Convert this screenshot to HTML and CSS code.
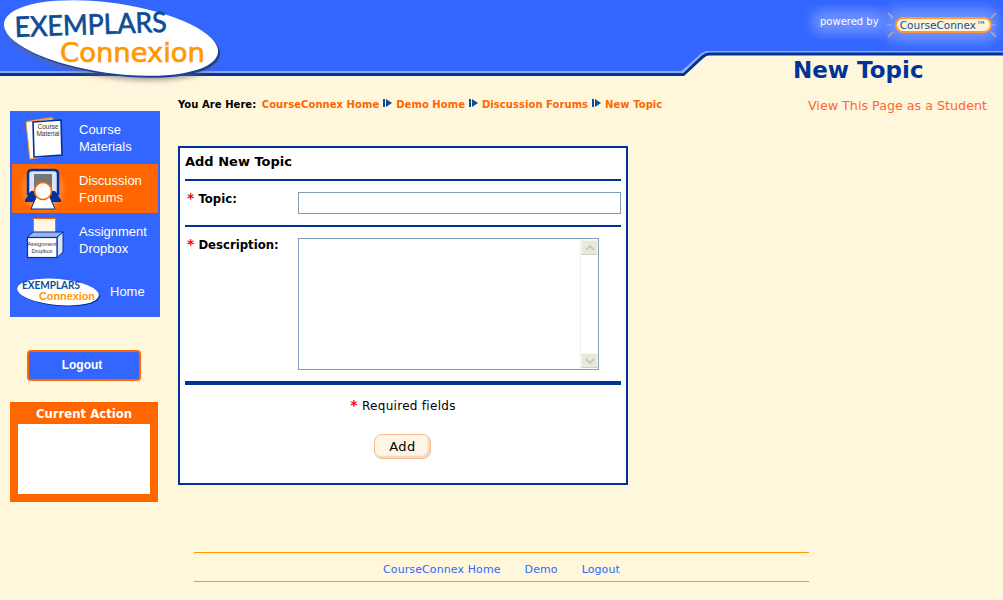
FILE: index.html
```html
<!DOCTYPE html>
<html lang="en">
  <head>
    <meta charset="UTF-8" />
    <title>New Topic</title>
    <link rel="stylesheet" href="styles.css">
  </head>
  <body>
    <header class="header">
      <svg class="header-bg" width="1003" height="85" viewBox="0 0 1003 85">
        <defs>
          <filter id="soft" x="-20%" y="-20%" width="140%" height="140%"><feGaussianBlur stdDeviation="6" /></filter>
        </defs>
        <path d="M0 0H1003V51H709Q705 51 701 54L682 71H0Z" fill="#3366ff" />
        <rect x="812" y="10" width="74" height="24" rx="10" fill="#6b8fff" filter="url(#soft)" />
        <rect x="886" y="8" width="112" height="34" rx="12" fill="#6b8fff" filter="url(#soft)" />
        <path d="M0 72H682L701 55Q705 52 709 52H1003" fill="none" stroke="#8fa8f0" stroke-width="2" />
        <path d="M0 74.5H683.5L703 56.5Q706 54 709 54H1003" fill="none" stroke="#003399" stroke-width="3" />
        <path d="M888 13L893 18M887 25H892M888 37L893 32M996 13L991 18M991 25H996M996 37L991 32" stroke="#ffb066" stroke-width="1.2" opacity=".8" />
      </svg>
      <svg class="logo" width="232" height="90" viewBox="0 0 232 90">
        <defs>
          <filter id="drop" x="-10%" y="-10%" width="120%" height="130%"><feGaussianBlur stdDeviation="2.5" /></filter>
        </defs>
        <ellipse cx="113" cy="43" rx="107" ry="35" transform="rotate(8 113 43)" fill="#666" opacity=".55" filter="url(#drop)" />
        <ellipse cx="113" cy="40" rx="108" ry="35" transform="rotate(8 113 40)" fill="#1c3f9c" />
        <ellipse cx="111" cy="38" rx="108" ry="35" transform="rotate(8 111 38)" fill="#fff" />
        <text x="15" y="37" class="logo-top" textLength="152" lengthAdjust="spacingAndGlyphs" transform="rotate(-2 15 37)">EXEMPLARS</text>
        <text x="60" y="62" class="logo-bottom" textLength="145" lengthAdjust="spacingAndGlyphs">Connexion</text>
      </svg>
      <div class="powered">
        <span class="powered-by">powered by</span>
        <span class="cc-badge">CourseConnex™</span>
      </div>
      <h1 class="page-title">New Topic</h1>
    </header>

    <div class="page">
      <aside class="sidebar">
        <nav class="menu">
          <a class="menu-item">
            <svg class="menu-icon" width="44" height="48" viewBox="0 0 44 48">
              <path d="M4 7L29 3L31 6L6 43Z" fill="#ff9933" />
              <path d="M3 8L28 5L30 41L7 45Z" fill="#fff" stroke="#ff9933" />
              <path d="M10 8L38 6L39 41L11 43Z" fill="#fff" stroke="#003399" stroke-width="1.6" />
              <text x="25" y="15" class="icon-text">Course</text>
              <text x="25" y="22" class="icon-text">Material</text>
            </svg>
            <span>Course<br>Materials</span>
          </a>
          <a class="menu-item active">
            <svg class="menu-icon" width="44" height="48" viewBox="0 0 44 48">
              <defs>
                <radialGradient id="glow">
                  <stop offset="0" stop-color="#ffc299" />
                  <stop offset="1" stop-color="#ff6600" />
                </radialGradient>
              </defs>
              <circle cx="20" cy="24" r="25" fill="url(#glow)" />
              <path d="M9 5H31Q35 5 35 9V29H5V9Q5 5 9 5Z" fill="#dbe4fa" stroke="#003399" stroke-width="2.5" />
              <rect x="11" y="9" width="18" height="13" fill="#777" />
              <path d="M2 35L8 26H32L38 35V37H2Z" fill="#003399" />
              <path d="M14 30H26L32 44H8Z" fill="#fff" stroke="#003399" />
              <circle cx="20" cy="26" r="8.5" fill="#fff" stroke="#ff6600" stroke-width="1.6" />
            </svg>
            <span>Discussion<br>Forums</span>
          </a>
          <a class="menu-item">
            <svg class="menu-icon" width="44" height="48" viewBox="0 0 44 48">
              <rect x="10.5" y="3.5" width="22" height="19" fill="#fff5e6" stroke="#ff6600" />
              <path d="M4 22.5L10 17H40L34 22.5Z" fill="#99b3ee" stroke="#003399" />
              <path d="M34 22.5L40 17V37L34 42.5Z" fill="#dbe4fa" stroke="#003399" />
              <rect x="4.5" y="22.5" width="29.5" height="20" fill="#fff" stroke="#003399" stroke-width="1.2" />
              <text x="19" y="31" class="icon-text icon-small">Assignment</text>
              <text x="19" y="38" class="icon-text icon-small">Dropbox</text>
            </svg>
            <span>Assignment<br>Dropbox</span>
          </a>
          <a class="menu-item menu-home">
            <svg class="home-logo" width="86" height="34" viewBox="0 0 86 34">
              <ellipse cx="44" cy="19" rx="41" ry="13" transform="rotate(5 44 19)" fill="#003399" />
              <ellipse cx="43" cy="18" rx="41" ry="13" transform="rotate(5 43 18)" fill="#fff" />
              <text x="7" y="15" class="home-top" textLength="58" lengthAdjust="spacingAndGlyphs">EXEMPLARS</text>
              <text x="24" y="26" class="home-bottom" textLength="56" lengthAdjust="spacingAndGlyphs">Connexion</text>
            </svg>
            <span>Home</span>
          </a>
        </nav>
        <a class="logout-btn">Logout</a>
        <section class="action-box">
          <h2>Current Action</h2>
          <div class="action-body"></div>
        </section>
      </aside>

      <main class="main">
        <div class="topline">
          <div class="crumbs">
            <b>You Are Here:</b>
            <a>CourseConnex Home</a><i class="arrow"></i><a>Demo Home</a><i class="arrow"></i><a>Discussion Forums</a><i class="arrow"></i><a>New Topic</a>
          </div>
          <a class="student-link">View This Page as a Student</a>
        </div>

        <form class="card">
          <h2 class="card-title">Add New Topic</h2>
          <hr class="rule">
          <div class="field field-topic">
            <label><em>*</em> Topic:</label>
            <input type="text" class="topic-input">
          </div>
          <hr class="rule">
          <div class="field field-desc">
            <label><em>*</em> Description:</label>
            <div class="text-box">
              <textarea></textarea>
              <div class="scrollbar">
                <span class="scroll-btn">
                  <svg width="10" height="6" viewBox="0 0 10 6"><path d="M1 5L5 1L9 5" fill="none" stroke="#c9c9b4" stroke-width="2" /></svg>
                </span>
                <span class="scroll-btn">
                  <svg width="10" height="6" viewBox="0 0 10 6"><path d="M1 1L5 5L9 1" fill="none" stroke="#c9c9b4" stroke-width="2" /></svg>
                </span>
              </div>
            </div>
          </div>
          <hr class="rule rule-thick">
          <p class="required"><em>*</em> Required fields</p>
          <button type="button" class="add-btn">Add</button>
        </form>

        <footer class="footer">
          <a>CourseConnex Home</a>
          <a>Demo</a>
          <a>Logout</a>
        </footer>
      </main>
    </div>
  </body>
</html>
```

FILE: styles.css
```css
html, body {
  margin: 0;
  height: 600px;
  overflow: hidden;
}
body {
  background-color: #fff7dc;
  font-family: "DejaVu Sans", Verdana, sans-serif;
  color: #000;
}
a {
  text-decoration: none;
}

/* header */
.header {
  position: relative;
  height: 85px;
}
.header-bg,
.logo {
  position: absolute;
  top: 0;
  left: 0;
}
.logo-top {
  font: 28px "Lato", sans-serif;
  fill: #0f4c96;
  stroke: #0f4c96;
  stroke-width: .7;
}
.logo-bottom {
  font: 27px "DejaVu Sans", sans-serif;
  fill: #ff9900;
  stroke: #ff9900;
  stroke-width: .7;
}
.powered {
  position: absolute;
  top: 17px;
  left: 820px;
  display: flex;
  align-items: flex-start;
  gap: 16px;
}
.powered-by {
  color: #fff;
  font: 10px/10px "DejaVu Sans", sans-serif;
}
.cc-badge {
  width: 97px;
  height: 16px;
  box-sizing: border-box;
  background-color: #fff3d9;
  border: 2px solid #ff9933;
  border-radius: 8px;
  color: #0f4c96;
  font: 10.5px/12px "DejaVu Sans", sans-serif;
  text-align: center;
  white-space: nowrap;
}
.page-title {
  position: absolute;
  top: 57px;
  left: 793px;
  margin: 0;
  color: #003399;
  font-size: 23px;
  line-height: 26px;
  font-weight: bold;
}

/* sidebar */
.page {
  display: flex;
}
.sidebar {
  width: 148px;
  margin-left: 10px;
  padding-top: 26px;
  flex-shrink: 0;
}
.menu {
  width: 150px;
  height: 206px;
  background-color: #3366ff;
  box-sizing: border-box;
  padding: 1px 2px;
}
.menu-item {
  display: flex;
  align-items: center;
  height: 51px;
  color: #fff;
  font: 13px/17px "Liberation Sans", sans-serif;
}
.menu-item.active {
  background-color: #ff6600;
  height: 49px;
  margin-top: 1px;
  overflow: hidden;
}
.menu-item:nth-child(3) span {
  padding-top: 2px;
}
.menu-icon {
  margin-left: 11px;
  margin-right: 12px;
  flex-shrink: 0;
  overflow: visible;
}
.menu-home {
  height: 54px;
}
.home-logo {
  margin-left: 3px;
  margin-right: 9px;
  flex-shrink: 0;
}
.icon-text {
  font: 6.5px "Liberation Sans", sans-serif;
  fill: #333;
  text-anchor: middle;
}
.icon-small {
  font-size: 5.6px;
}
.home-top {
  font: bold 11px "Lato", sans-serif;
  fill: #0f4c96;
}
.home-bottom {
  font: bold 10px "Liberation Sans", sans-serif;
  fill: #ff9900;
}
.logout-btn {
  display: block;
  width: 110px;
  height: 27px;
  margin: 33px 0 21px 17px;
  background-color: #3366ff;
  border: 2px solid #ff6600;
  border-radius: 4px;
  color: #fff;
  font: bold 12px/27px "Liberation Sans", sans-serif;
  text-align: center;
  text-indent: -4px;
}
.action-box {
  background-color: #ff6600;
  height: 100px;
  box-sizing: border-box;
  padding: 0 8px;
}
.action-box h2 {
  margin: 0;
  height: 22px;
  color: #fff;
  font: bold 11.7px/24px "DejaVu Sans", sans-serif;
  text-align: center;
}
.action-body {
  background-color: #fff;
  height: 70px;
}

/* main column */
.main {
  margin-left: 20px;
  width: 809px;
}
.topline {
  display: flex;
  justify-content: space-between;
  padding-top: 13px;
  height: 48px;
}
.crumbs {
  font-size: 10px;
  line-height: 14px;
  font-weight: bold;
  letter-spacing: .05px;
  white-space: nowrap;
}
.crumbs b {
  margin-right: 2px;
}
.crumbs a {
  color: #ff6600;
}
.arrow {
  display: inline-block;
  position: relative;
  top: -1px;
  width: 0;
  height: 0;
  margin: 0 4px 0 7px;
  border-left: 6px solid #0f4c96;
  border-top: 4px solid transparent;
  border-bottom: 4px solid transparent;
}
.arrow::before {
  content: "";
  position: absolute;
  top: -4px;
  left: -9px;
  width: 2px;
  height: 8px;
  background-color: #0f4c96;
}
.student-link {
  color: #ff6633;
  font-size: 12.7px;
  line-height: 16px;
}

/* form card */
.card {
  width: 450px;
  height: 339px;
  box-sizing: border-box;
  background-color: #fff;
  border: 2px solid #003399;
  padding: 0 5px;
  text-align: center;
}
.card-title {
  margin: 0;
  height: 31px;
  font-size: 13px;
  line-height: 27px;
  text-align: left;
}
.rule {
  height: 2px;
  margin: 0;
  border: 0;
  background-color: #003399;
}
.rule-thick {
  height: 4px;
}
.field {
  display: flex;
  text-align: left;
}
.field label {
  width: 113px;
  font-size: 11.7px;
  font-weight: bold;
  line-height: 15px;
  padding-left: 2px;
  box-sizing: border-box;
  flex-shrink: 0;
}
em {
  color: #ff0000;
  font-size: 14px;
  line-height: 0;
  font-style: normal;
  font-weight: bold;
}
.field-topic {
  height: 44px;
  padding-top: 11px;
  box-sizing: border-box;
}
.topic-input {
  width: 323px;
  height: 22px;
  box-sizing: border-box;
  border: 1px solid #7f9db9;
  padding: 0;
}
.field-desc {
  height: 154px;
  padding-top: 11px;
  box-sizing: border-box;
}
.text-box {
  display: flex;
  width: 301px;
  height: 132px;
  box-sizing: border-box;
  border: 1px solid #7f9db9;
}
.text-box textarea {
  flex: 1;
  border: 0;
  padding: 0;
  resize: none;
  outline: 0;
}
.scrollbar {
  width: 17px;
  display: flex;
  flex-direction: column;
  justify-content: space-between;
  background-color: #fff;
  border-left: 1px solid #eeeeea;
  padding: 1px 0;
}
.scroll-btn {
  display: flex;
  align-items: center;
  justify-content: center;
  height: 15px;
  background-color: #e8e8dc;
  border: 1px solid #f6f6f0;
  border-bottom-color: #d0d0c4;
  box-sizing: border-box;
}
.required {
  margin: 14px 0 0;
  font-size: 12px;
  line-height: 15px;
  letter-spacing: .3px;
}
.add-btn {
  display: block;
  width: 57px;
  height: 25px;
  margin: 20px 0 0 189px;
  padding: 0;
  background-color: #fdf5e6;
  border: 1px solid #ffb987;
  border-radius: 8px;
  box-shadow: inset -2px -2px 2px #e4d9c4;
  color: #000;
  font: 13px "DejaVu Sans", sans-serif;
  letter-spacing: .5px;
}

/* footer */
.footer {
  display: flex;
  justify-content: center;
  gap: 24px;
  width: 615px;
  height: 28px;
  margin: 67px 0 0 16px;
  border-top: 1px solid #ff9900;
  border-bottom: 1px solid #ff9900;
  font-size: 11px;
  line-height: 33px;
  letter-spacing: .1px;
}
.footer a {
  color: #3366ff;
}
```
